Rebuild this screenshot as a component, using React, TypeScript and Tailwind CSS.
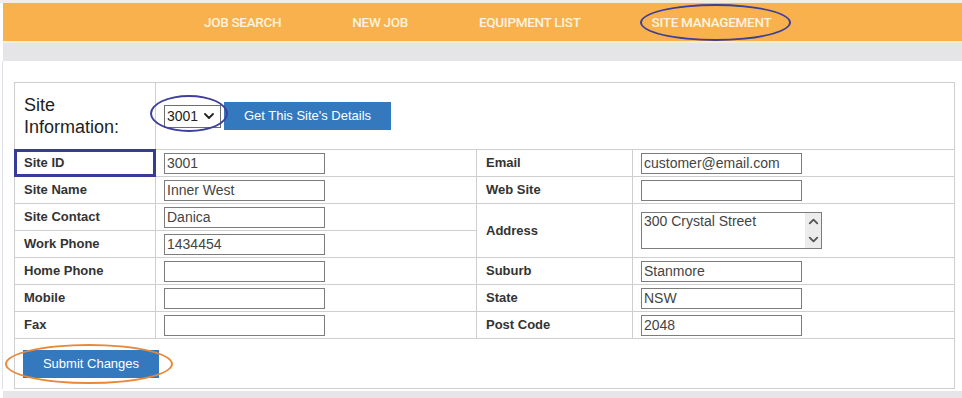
import { ChevronDown, ChevronUp } from "lucide-react";

const NAV = ["JOB SEARCH", "NEW JOB", "EQUIPMENT LIST", "SITE MANAGEMENT"];

const CELL = "border border-[#cfcfcf]";
const LABEL = `${CELL} px-[9px] text-[13px] font-bold text-[#333] align-middle`;

const Field = ({ value = "" }: { value?: string }) => (
  <input
    readOnly
    value={value}
    className="block h-[21px] w-[161px] border border-[#7c7c7c] bg-white px-[2px] text-[14px] text-[#444] outline-none"
  />
);

const Row = ({ label, value }: { label: string; value?: string }) => (
  <>
    <td className={LABEL}>{label}</td>
    <td className={`${CELL} pl-[8px]`}>
      <Field value={value} />
    </td>
  </>
);

export default function App() {
  return (
    <div className="relative h-[398px] w-[962px] overflow-hidden bg-white font-['Liberation_Sans',Arial,sans-serif]">
      <div className="h-[3px] bg-[#f4eee2]" />
      {/* NAV */}
      <div className="relative ml-[3px] flex h-[38px] items-center gap-[71px] bg-[#f8b14c] pl-[201px]">
        {NAV.map((n) => (
          <span
            key={n}
            className="font-['Roboto',sans-serif] text-[13.5px] font-medium tracking-[-0.3px] text-[#fff4dd]"
          >
            {n}
          </span>
        ))}
        <div className="absolute left-[637px] top-[1px] h-[37px] w-[151px] rounded-[50%] border-[2.5px] border-[#3d3f9c]" />
      </div>
      <div className="ml-[3px] h-[2px] bg-[#f6ecd8]" />
      <div className="ml-[3px] h-[18px] bg-[#e5e5e7]" />

      <div className="ml-[2px] border-l border-[#dfe1ea] pl-[11px] pt-[21px]">
        <table className="w-[940px] table-fixed border-collapse border border-[#c8c8c8]">
          <colgroup>
            <col className="w-[141px]" />
            <col className="w-[321px]" />
            <col className="w-[156px]" />
            <col className="w-[322px]" />
          </colgroup>
          <tbody>
            <tr className="h-[67px]">
              <td className={`${CELL} px-[9px] align-middle text-[18px] leading-[22px] text-[#222]`}>
                Site
                <br />
                Information:
              </td>
              <td colSpan={3} className={`${CELL} pl-[8px]`}>
                <div className="relative flex items-center gap-[3px]">
                  <div className="flex h-[23px] w-[57px] items-center justify-between border border-[#6e6e6e] pl-[2px] pr-[3px] text-[14px] text-[#222]">
                    3001
                    <ChevronDown size={16} strokeWidth={2.75} className="text-[#222]" />
                  </div>
                  <button className="h-[28px] w-[167px] bg-[#3479bd] text-[13px] text-white">
                    Get This Site's Details
                  </button>
                  <div className="absolute left-[-14px] top-[-7px] h-[37px] w-[78px] rounded-[50%] border-[2.5px] border-[#3d3f9c]" />
                </div>
              </td>
            </tr>
            <tr className="h-[27px]">
              <td className={`${LABEL} relative`}>
                Site ID
                <div className="absolute inset-[-1px] border-[3px] border-[#363c98]" />
              </td>
              <td className={`${CELL} pl-[8px]`}>
                <Field value="3001" />
              </td>
              <Row label="Email" value="customer@email.com" />
            </tr>
            <tr className="h-[27px]">
              <Row label="Site Name" value="Inner West" />
              <Row label="Web Site" />
            </tr>
            <tr className="h-[27px]">
              <Row label="Site Contact" value="Danica" />
              <td rowSpan={2} className={LABEL}>
                Address
              </td>
              <td rowSpan={2} className={`${CELL} pl-[8px]`}>
                <div className="flex h-[37px] w-[181px] border border-[#7c7c7c] bg-white">
                  <div className="flex-1 px-[2px] text-[14px] leading-[17px] text-[#444]">
                    300 Crystal Street
                  </div>
                  <div className="flex w-[16px] flex-col items-center justify-between bg-[#ececec] py-[1px] text-[#555]">
                    <ChevronUp size={15} strokeWidth={3} />
                    <ChevronDown size={15} strokeWidth={3} />
                  </div>
                </div>
              </td>
            </tr>
            <tr className="h-[27px]">
              <Row label="Work Phone" value="1434454" />
            </tr>
            <tr className="h-[27px]">
              <Row label="Home Phone" />
              <Row label="Suburb" value="Stanmore" />
            </tr>
            <tr className="h-[27px]">
              <Row label="Mobile" />
              <Row label="State" value="NSW" />
            </tr>
            <tr className="h-[27px]">
              <Row label="Fax" />
              <Row label="Post Code" value="2048" />
            </tr>
            <tr className="h-[50px]">
              <td colSpan={4} className={`${CELL} pl-[8px] align-top pt-[11px]`}>
                <div className="relative w-fit">
                  <button className="h-[28px] w-[136px] bg-[#3479bd] text-[13px] text-white">
                    Submit Changes
                  </button>
                  <div className="absolute left-[-18px] top-[-6px] h-[40px] w-[168px] rounded-[50%] border-2 border-[#e8883a]" />
                </div>
              </td>
            </tr>
          </tbody>
        </table>
      </div>
      <div className="ml-[3px] mt-[2px] h-[10px] bg-[#e6e6e8]" />
    </div>
  );
}
